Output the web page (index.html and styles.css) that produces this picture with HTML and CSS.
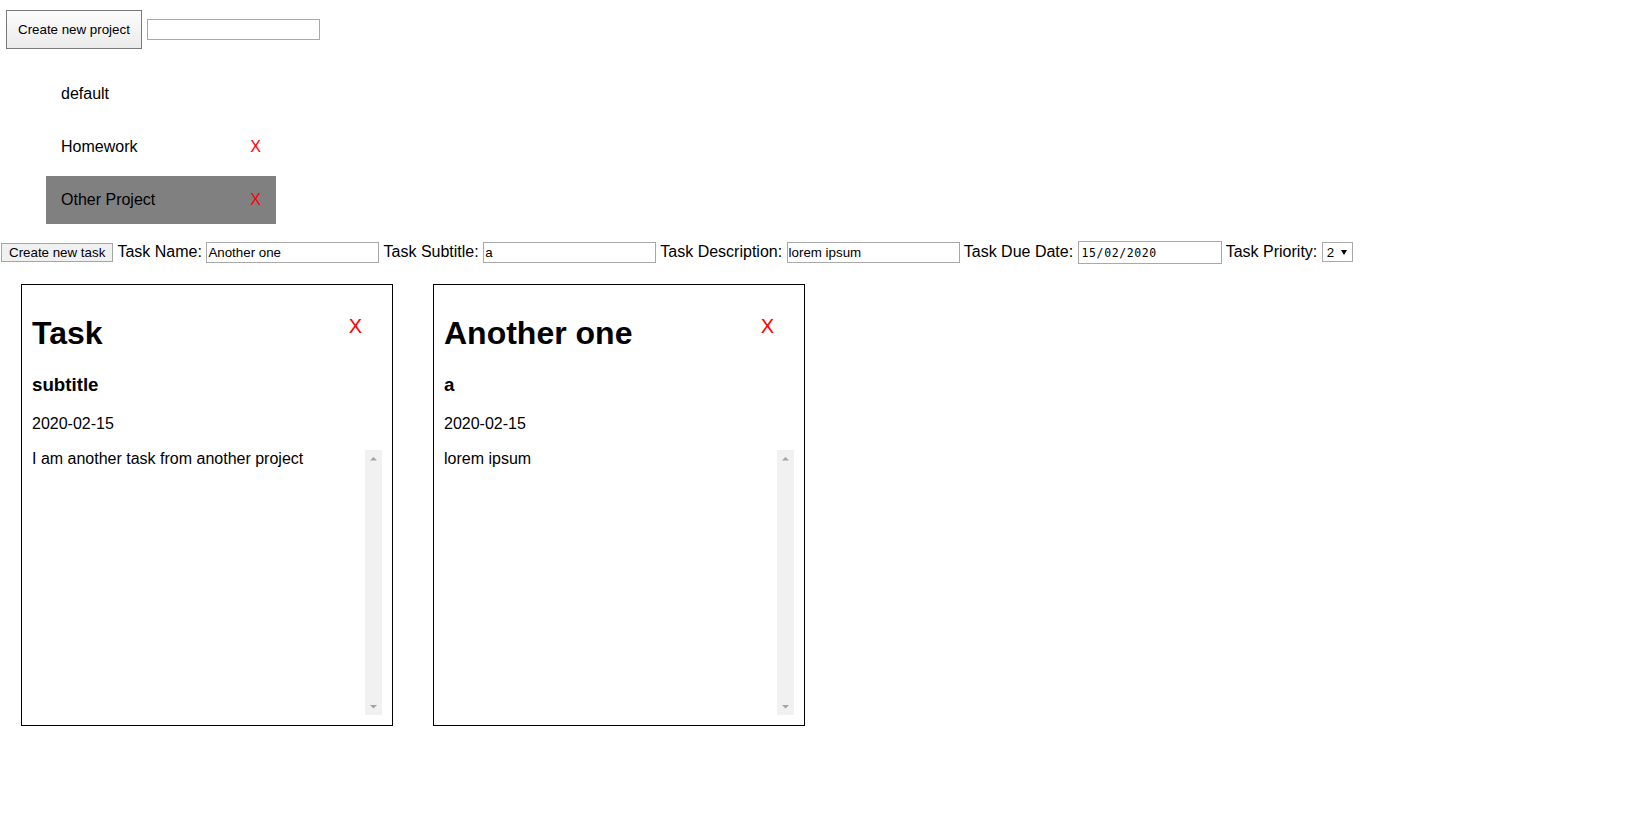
FILE: index.html
```html
<!DOCTYPE html>
<html lang="en">
<head>
<meta charset="utf-8">
<title>Todo projects</title>
<link rel="stylesheet" href="styles.css">
</head>
<body>
<div class="project-bar">
  <button class="btn-project">Create new project</button>
  <input class="field field-project" type="text">
</div>

<ul class="projects">
  <li class="project"><span>default</span></li>
  <li class="project"><span>Homework</span><span class="remove">X</span></li>
  <li class="project active"><span>Other Project</span><span class="remove">X</span></li>
</ul>

<div class="task-form"><button class="btn-task">Create new task</button> Task Name: <input class="field" type="text" value="Another one"> Task Subtitle: <input class="field" type="text" value="a"> Task Description: <input class="field" type="text" value="lorem ipsum"> Task Due Date: <input class="field field-date" type="text" value="15/02/2020"> Task Priority: <span class="select-wrap"><select class="select"><option>1</option><option selected>2</option><option>3</option></select></span></div>

<div class="tasks">
  <div class="card">
    <div class="card-head">
      <h1 class="card-title">Task</h1>
      <span class="card-remove">X</span>
    </div>
    <h3 class="card-subtitle">subtitle</h3>
    <p class="card-date">2020-02-15</p>
    <div class="card-desc">
      <div class="desc-text">I am another task from another project</div>
      <div class="scrollbar">
        <svg class="arrow" width="17" height="17" viewBox="0 0 17 17"><path d="M5 10.5 L12 10.5 L8.5 7 Z" fill="#a3a3a3"/></svg>
        <svg class="arrow" width="17" height="17" viewBox="0 0 17 17"><path d="M5 7 L12 7 L8.5 10.5 Z" fill="#a3a3a3"/></svg>
      </div>
    </div>
  </div>
  <div class="card">
    <div class="card-head">
      <h1 class="card-title">Another one</h1>
      <span class="card-remove">X</span>
    </div>
    <h3 class="card-subtitle">a</h3>
    <p class="card-date">2020-02-15</p>
    <div class="card-desc">
      <div class="desc-text">lorem ipsum</div>
      <div class="scrollbar">
        <svg class="arrow" width="17" height="17" viewBox="0 0 17 17"><path d="M5 10.5 L12 10.5 L8.5 7 Z" fill="#a3a3a3"/></svg>
        <svg class="arrow" width="17" height="17" viewBox="0 0 17 17"><path d="M5 7 L12 7 L8.5 10.5 Z" fill="#a3a3a3"/></svg>
      </div>
    </div>
  </div>
</div>
</body>
</html>
```

FILE: styles.css
```css
* { box-sizing: border-box; }

body {
  margin: 0;
  font-family: "Liberation Sans", Arial, sans-serif;
  font-size: 16px;
  color: #000;
  background: #fff;
}

.project-bar {
  display: flex;
  align-items: center;
  gap: 5px;
  padding: 10px 0 0 6px;
}

.btn-project {
  height: 39px;
  padding: 0 11px;
  font-family: "Liberation Sans", Arial, sans-serif;
  font-size: 13.33px;
  color: #000;
  background: linear-gradient(#fcfcfc, #ebebeb);
  border: 1px solid #7a7a7a;
  border-radius: 0;
}

.field {
  width: 173px;
  height: 21px;
  padding: 1px 1px;
  font-family: "Liberation Sans", Arial, sans-serif;
  font-size: 13.33px;
  color: #000;
  border: 1px solid #a9a9a9;
  border-radius: 0;
  background: #fff;
  vertical-align: baseline;
}

.field-project {
  width: 173px;
}

.field-date {
  width: 144px;
  height: 23px;
  font-family: "DejaVu Sans Mono", monospace;
  font-size: 11.5px;
  letter-spacing: 0.6px;
  padding: 1px 3px;
}

.projects {
  list-style: none;
  margin: 21px 0 0 46px;
  padding: 0;
  width: 230px;
}

.project {
  height: 48px;
  margin-bottom: 5px;
  padding: 0 15px;
  display: flex;
  align-items: center;
  justify-content: space-between;
}

.project.active {
  background: #808080;
}

.remove {
  color: #ff0000;
}

.task-form {
  margin-top: 17px;
  padding-left: 1px;
  white-space: nowrap;
}

.btn-task {
  padding: 1px 7px;
  height: 19px;
  font-family: "Liberation Sans", Arial, sans-serif;
  font-size: 13.33px;
  color: #000;
  background: #f0f0f0;
  border: 1px solid #a6a6a6;
  border-radius: 0;
}

.select-wrap {
  position: relative;
  display: inline-block;
}

.select-wrap::after {
  content: "";
  position: absolute;
  right: 6px;
  top: 8px;
  border-left: 3.5px solid transparent;
  border-right: 3.5px solid transparent;
  border-top: 5px solid #000;
  pointer-events: none;
}

.select {
  -webkit-appearance: none;
  appearance: none;
  width: 31px;
  height: 20px;
  padding: 0 0 0 4px;
  font-family: "Liberation Sans", Arial, sans-serif;
  font-size: 13.33px;
  color: #000;
  background: #fff;
  border: 1px solid #a9a9a9;
  border-radius: 0;
}

.tasks {
  display: flex;
  gap: 40px;
  padding-left: 21px;
  margin-top: 20px;
}

.card {
  width: 372px;
  height: 442px;
  border: 1px solid #000;
  padding: 10px;
  display: flex;
  flex-direction: column;
}

.card-head {
  display: flex;
  justify-content: space-between;
  align-items: flex-start;
  padding-top: 20px;
}

.card-title {
  margin: 0;
  font-size: 32px;
  font-weight: bold;
  line-height: 37px;
}

.card-remove {
  color: #ff0000;
  font-size: 20px;
  line-height: 23px;
  margin-right: 20px;
}

.card-subtitle {
  margin: 22px 0 0;
  font-size: 18.72px;
  font-weight: bold;
  line-height: 22px;
}

.card-date {
  margin: 19px 0 0;
  line-height: 18px;
}

.card-desc {
  flex: 1;
  margin-top: 17px;
  display: flex;
}

.desc-text {
  flex: 1;
  line-height: 18px;
}

.scrollbar {
  width: 17px;
  background: #f1f1f1;
  display: flex;
  flex-direction: column;
  justify-content: space-between;
}

.arrow {
  display: block;
}
```
